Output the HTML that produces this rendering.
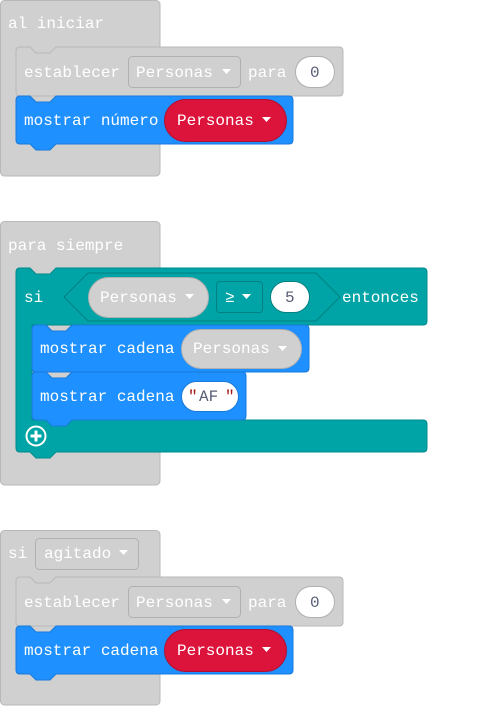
<!DOCTYPE html>
<html><head><meta charset="utf-8"><style>
html,body{margin:0;padding:0;background:#fff;width:479px;height:706px;overflow:hidden}
svg{display:block}
text{font-family:"Liberation Mono",monospace;font-size:16px;fill:#fff}
.d{fill:#575e75}
</style></head><body>
<svg width="479" height="706" viewBox="0 0 479 706" xmlns="http://www.w3.org/2000/svg">
<!-- Block 1 -->
<rect x="0.5" y="0.5" width="159.5" height="175.5" rx="4" fill="#d0d0d0" stroke="#b8b8b8"/>
<text x="8" y="28">al iniciar</text>
<path d="M16,51 Q16,47 20,47 H30 L36,53 H50 L56,47 H339 Q343,47 343,51 V92 Q343,96 339,96 H20 Q16,96 16,92 Z" fill="#d0d0d0" stroke="#b8b8b8"/>
<text x="24" y="77">establecer</text>
<rect x="128.5" y="56.5" width="112" height="31" rx="4" fill="#d0d0d0" stroke="#b0b0b0"/>
<text x="136" y="77">Personas</text>
<path d="M222,69 h9 l-4.5,5 z" fill="#fff"/>
<text x="248" y="77">para</text>
<rect x="295.5" y="56.5" width="39" height="31" rx="15.5" fill="#fff" stroke="#b0b0b0"/>
<text class="d" x="310" y="77">0</text>
<path d="M16,100 Q16,96 20,96 H30 L36,102 H50 L56,96 H289 Q293,96 293,100 V140 Q293,144 289,144 H56 L50,150 H36 L30,144 H20 Q16,144 16,140 Z" fill="#1e90ff" stroke="#1a7ad8"/>
<text x="24" y="125">mostrar número</text>
<rect x="164.5" y="99.5" width="122" height="42" rx="21" fill="#dc143c" stroke="#b01030"/>
<text x="177" y="125">Personas</text>
<path d="M262,117 h9 l-4.5,5 z" fill="#fff"/>

<!-- Block 2 -->
<rect x="0.5" y="221.5" width="159.5" height="263.5" rx="4" fill="#d0d0d0" stroke="#b8b8b8"/>
<text x="8" y="250">para siempre</text>
<path d="M16,272 Q16,268 20,268 H30 L36,274 H50 L56,268 H423 Q427,268 427,272 V321 Q427,325 423,325 H32 V420 H423 Q427,420 427,424 V448 Q427,452 423,452 H56 L50,458 H36 L30,452 H20 Q16,452 16,448 Z" fill="#00a4a6" stroke="#008a8c"/>
<text x="24" y="302">si</text>
<path d="M64,297 L88,273 H316 L340,297 L316,321 H88 Z" fill="#00a4a6" stroke="#008082"/>
<rect x="88.5" y="277.5" width="120" height="40" rx="20" fill="#d0d0d0" stroke="#b0b0b0"/>
<text x="100" y="302">Personas</text>
<path d="M185,294 h9 l-4.5,5 z" fill="#fff"/>
<rect x="216.5" y="281.5" width="46" height="31" rx="3" fill="#00a4a6" stroke="#008082"/>
<text x="225" y="302">≥</text>
<path d="M242,294 h9 l-4.5,5 z" fill="#fff"/>
<rect x="270.5" y="281.5" width="39" height="31" rx="15.5" fill="#fff" stroke="#008082"/>
<text class="d" x="285" y="302">5</text>
<text x="342" y="302">entonces</text>
<path d="M32,329 Q32,325 36,325 H46 L52,331 H66 L72,325 H305 Q309,325 309,329 V368 Q309,372 305,372 H36 Q32,372 32,368 Z" fill="#1e90ff" stroke="#1a7ad8"/>
<text x="40" y="353">mostrar cadena</text>
<rect x="181.5" y="329.5" width="120" height="39" rx="19.5" fill="#d0d0d0" stroke="#b0b0b0"/>
<text x="193" y="353">Personas</text>
<path d="M278,346 h9 l-4.5,5 z" fill="#fff"/>
<path d="M32,376 Q32,372 36,372 H46 L52,378 H66 L72,372 H242 Q246,372 246,376 V416 Q246,420 242,420 H72 L66,426 H52 L46,420 H36 Q32,420 32,416 Z" fill="#1e90ff" stroke="#1a7ad8"/>
<text x="40" y="401">mostrar cadena</text>
<rect x="181.5" y="381.5" width="57" height="30" rx="15" fill="#fff" stroke="#1a7ad8"/>
<text x="188" y="401" fill="#a31515" style="fill:#a31515">"</text>
<text class="d" x="199" y="401">AF</text>
<text x="225" y="401" style="fill:#a31515">"</text>
<circle cx="36" cy="436" r="9.5" fill="none" stroke="#fff" stroke-width="2"/>
<path d="M36,430.5 V441.5 M30.5,436 H41.5" stroke="#fff" stroke-width="3"/>

<!-- Block 3 -->
<rect x="0.5" y="530.5" width="159.5" height="174.5" rx="4" fill="#d0d0d0" stroke="#b8b8b8"/>
<text x="8" y="558">si</text>
<rect x="35.5" y="538.5" width="103" height="31" rx="4" fill="#d0d0d0" stroke="#b0b0b0"/>
<text x="44" y="558">agitado</text>
<path d="M119,550 h9 l-4.5,5 z" fill="#fff"/>
<path d="M16,581 Q16,577 20,577 H30 L36,583 H50 L56,577 H339 Q343,577 343,581 V622 Q343,626 339,626 H20 Q16,626 16,622 Z" fill="#d0d0d0" stroke="#b8b8b8"/>
<text x="24" y="607">establecer</text>
<rect x="128.5" y="586.5" width="112" height="31" rx="4" fill="#d0d0d0" stroke="#b0b0b0"/>
<text x="136" y="607">Personas</text>
<path d="M222,599 h9 l-4.5,5 z" fill="#fff"/>
<text x="248" y="607">para</text>
<rect x="295.5" y="586.5" width="39" height="31" rx="15.5" fill="#fff" stroke="#b0b0b0"/>
<text class="d" x="310" y="607">0</text>
<path d="M16,630 Q16,626 20,626 H30 L36,632 H50 L56,626 H289 Q293,626 293,630 V670 Q293,674 289,674 H56 L50,680 H36 L30,674 H20 Q16,674 16,670 Z" fill="#1e90ff" stroke="#1a7ad8"/>
<text x="24" y="655">mostrar cadena</text>
<rect x="164.5" y="629.5" width="122" height="42" rx="21" fill="#dc143c" stroke="#b01030"/>
<text x="177" y="655">Personas</text>
<path d="M262,647 h9 l-4.5,5 z" fill="#fff"/>
</svg>
</body></html>
